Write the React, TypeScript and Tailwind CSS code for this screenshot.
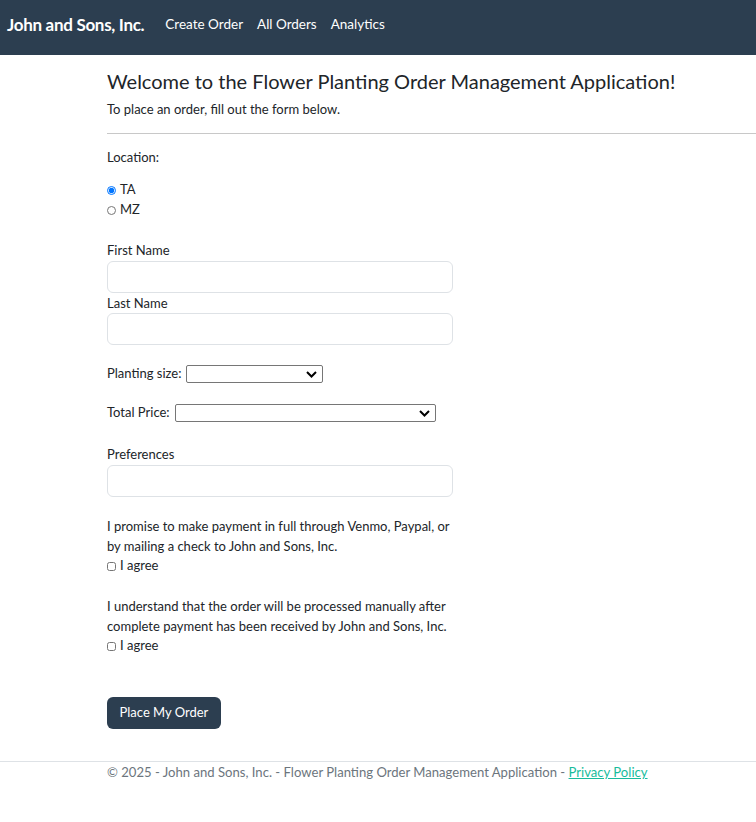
import React from "react";

export default function App() {
  return (
    <div className="min-h-[822px] bg-white text-[13px] text-[#212529]" style={{ fontFamily: "Lato, 'Noto Sans', sans-serif" }}>
      <nav className="h-[55px] bg-[#2c3e50] flex items-center pl-[7px] pb-[6px]">
        <span className="text-white font-bold text-[17px] tracking-[-0.3px] mr-[21px]">John and Sons, Inc.</span>
        <div className="flex gap-[14px] text-[13.5px] text-white">
          <span>Create Order</span>
          <span>All Orders</span>
          <span>Analytics</span>
        </div>
      </nav>
      <main className="pl-[107px]">
        <h4 className="text-[20px] leading-[25px] mt-[14px] text-[#212529]">Welcome to the Flower Planting Order Management Application!</h4>
        <p className="mt-[5px] leading-[20px]">To place an order, fill out the form below.</p>
        <hr className="mt-[14px] border-t border-[#c8c8c8]" />
        <form className="w-[346px]">
          <div className="mt-[13px] leading-[20px]">Location:</div>
          <div className="mt-[13px] flex flex-col">
            <label className="flex items-center h-[20px]">
              <input type="radio" name="loc" defaultChecked className="w-[9px] h-[9px] m-0 mr-[4px] accent-[#0075ff]" />
              TA
            </label>
            <label className="flex items-center h-[20px]">
              <input type="radio" name="loc" className="w-[9px] h-[9px] m-0 mr-[4px]" />
              MZ
            </label>
          </div>
          <div className="mt-[20px] leading-[20px]">First Name</div>
          <input className="mt-[1px] block w-[346px] h-[32px] rounded-[6px] border border-[#dee2e6]" />
          <div className="leading-[20px]">Last Name</div>
          <input className="block w-[346px] h-[32px] rounded-[6px] border border-[#dee2e6]" />
          <div className="mt-[20px] flex items-center h-[18px]">
            <span>Planting size:</span>
            <select className="ml-[5px] w-[137px] h-[18px] border border-[#767676] rounded-[2px] text-[13px] appearance-none bg-white" />
            <Chevron className="-ml-[17px]" />
          </div>
          <div className="mt-[21px] flex items-center h-[18px]">
            <span>Total Price:</span>
            <select className="ml-[5px] w-[261px] h-[18px] border border-[#767676] rounded-[2px] text-[13px] appearance-none bg-white" />
            <Chevron className="-ml-[17px]" />
          </div>
          <div className="mt-[22px] leading-[20px]">Preferences</div>
          <input className="mt-[1px] block w-[346px] h-[32px] rounded-[6px] border border-[#dee2e6]" />
          <p className="mt-[19px] leading-[20px]">I promise to make payment in full through Venmo, Paypal, or by mailing a check to John and Sons, Inc.</p>
          <label className="flex items-center h-[20px]">
            <input type="checkbox" className="w-[9px] h-[9px] m-0 mr-[4px]" />
            I agree
          </label>
          <p className="mt-[20px] leading-[20px]">I understand that the order will be processed manually after complete payment has been received by John and Sons, Inc.</p>
          <label className="flex items-center h-[20px]">
            <input type="checkbox" className="w-[9px] h-[9px] m-0 mr-[4px]" />
            I agree
          </label>
          <button type="button" className="mt-[41px] h-[32px] px-[12.5px] rounded-[6px] bg-[#2c3e50] text-white text-[13px]">Place My Order</button>
        </form>
      </main>
      <footer className="mt-[32px] border-t border-[#dee2e6] pl-[107px] leading-[20px] text-[13.1px] text-[#6c757d]">
        © 2025 - John and Sons, Inc. - Flower Planting Order Management Application - <span className="text-[#18bc9c] underline">Privacy Policy</span>
      </footer>
    </div>
  );
}

function Chevron({ className = "" }: { className?: string }) {
  return (
    <svg width="11" height="7" viewBox="0 0 11 7" className={"pointer-events-none " + className}>
      <path d="M1 1 L5.5 5.5 L10 1" stroke="#000" strokeWidth="2" fill="none" />
    </svg>
  );
}
